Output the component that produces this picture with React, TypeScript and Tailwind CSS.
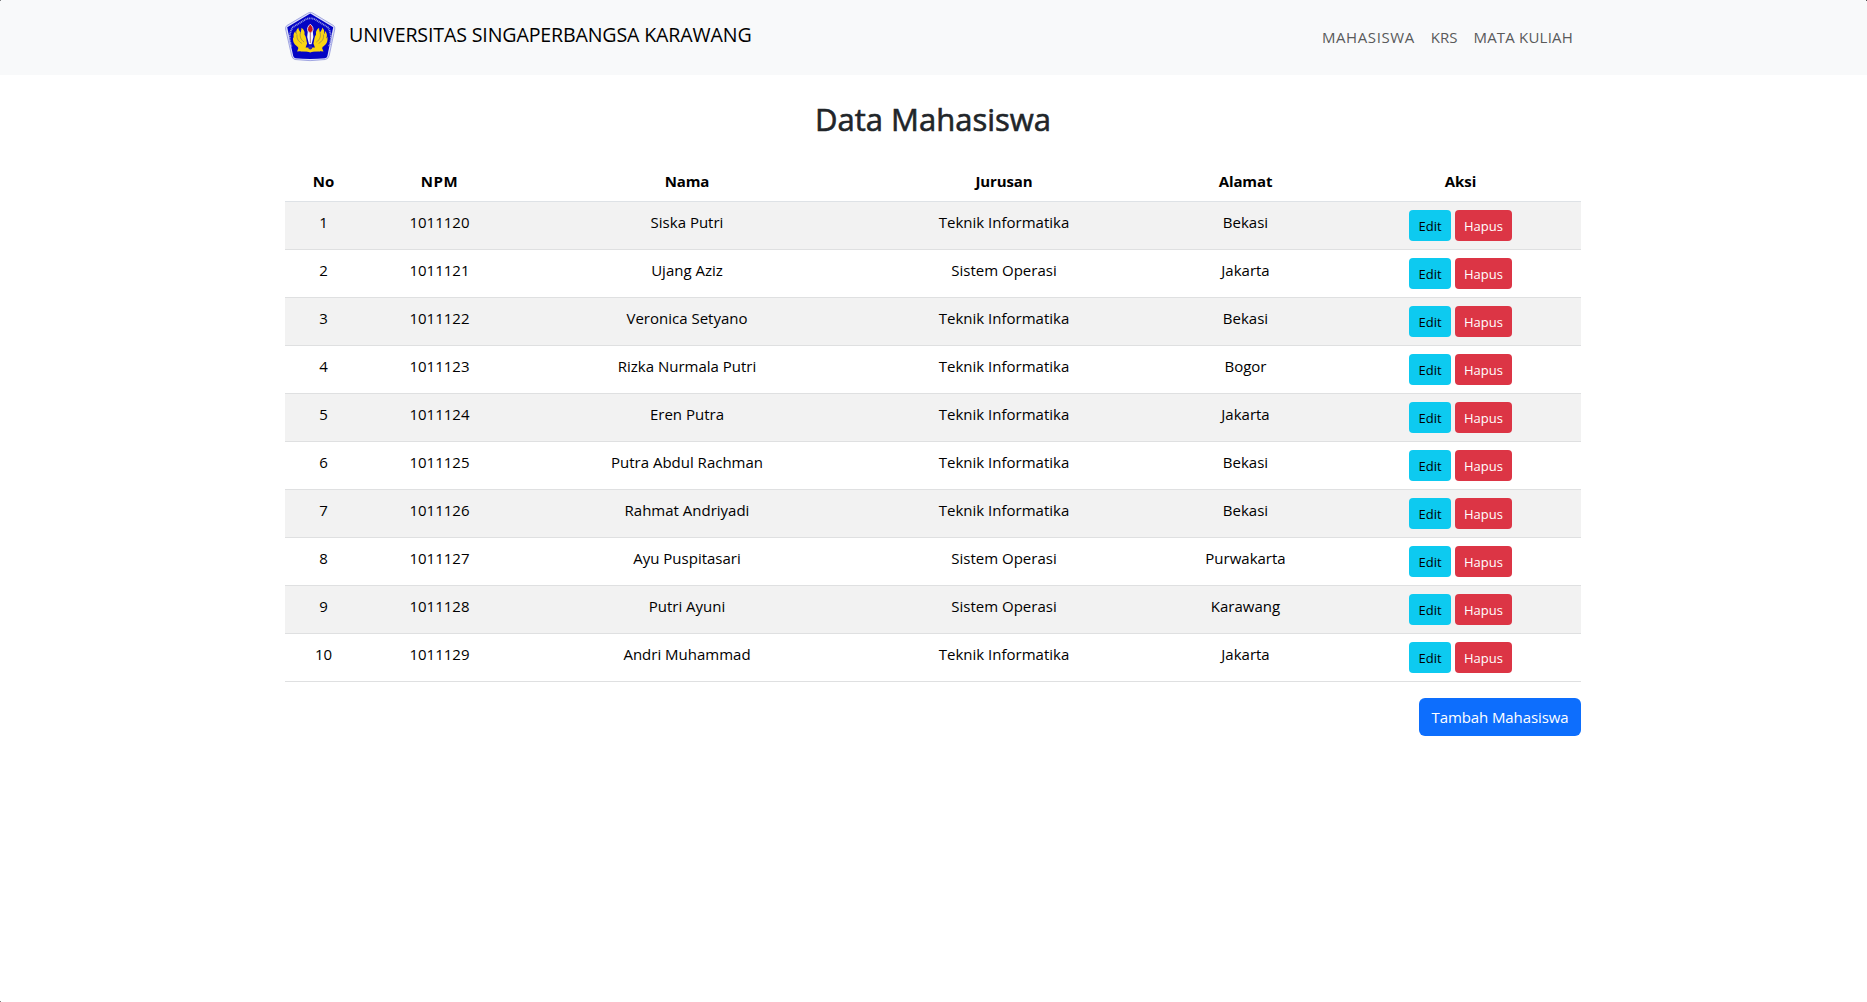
type Student = {
  npm: string;
  nama: string;
  jurusan: string;
  alamat: string;
};

const TI = 'Teknik Informatika';
const SO = 'Sistem Operasi';

const students: Student[] = [
  { npm: '1011120', nama: 'Siska Putri', jurusan: TI, alamat: 'Bekasi' },
  { npm: '1011121', nama: 'Ujang Aziz', jurusan: SO, alamat: 'Jakarta' },
  { npm: '1011122', nama: 'Veronica Setyano', jurusan: TI, alamat: 'Bekasi' },
  { npm: '1011123', nama: 'Rizka Nurmala Putri', jurusan: TI, alamat: 'Bogor' },
  { npm: '1011124', nama: 'Eren Putra', jurusan: TI, alamat: 'Jakarta' },
  { npm: '1011125', nama: 'Putra Abdul Rachman', jurusan: TI, alamat: 'Bekasi' },
  { npm: '1011126', nama: 'Rahmat Andriyadi', jurusan: TI, alamat: 'Bekasi' },
  { npm: '1011127', nama: 'Ayu Puspitasari', jurusan: SO, alamat: 'Purwakarta' },
  { npm: '1011128', nama: 'Putri Ayuni', jurusan: SO, alamat: 'Karawang' },
  { npm: '1011129', nama: 'Andri Muhammad', jurusan: TI, alamat: 'Jakarta' },
];

function Logo() {
  return (
    <svg width="52" height="54" viewBox="0 0 52 54" className="block" aria-hidden="true">
      {/* pentagon shield with a double rim */}
      <path
        d="M26.3 2.4Q27.5 2.4 29 3.2L49.6 15.6Q51.2 17 50.8 19L45.2 45.5Q44.2 49 41.4 49.5Q26 51.8 11 49.5Q8.4 49 7.6 45.5L1.6 19Q1.2 17 2.8 15.6L23.8 3.2Q25.2 2.4 26.3 2.4Z"
        fill="#dfe1f8"
        stroke="#8e94da"
        strokeWidth="0.8"
      />
      <path
        d="M26.3 3.6L49.2 17.2L43.4 46Q43 47.9 41 48.2Q26 49.8 11.6 48.2Q9.6 47.9 9.2 46L3.2 17.2Z"
        fill="#0404c4"
      />
      {/* lettering ring */}
      <path
        d="M7.6 36.5C4.8 29.5 5 23 8.8 17.2L22 9.2Q26.2 7.4 30.6 9.2L43.8 17.2C47.6 23 47.8 29.5 45 36.5"
        fill="none"
        stroke="#9498e4"
        strokeWidth="1.8"
        strokeDasharray="1.1 0.65"
      />
      {/* wings */}
      <g transform="translate(-2.4 0) scale(1.09 1)">
        <g fill="#f8d414">
          <path d="M15.6 17.6C15 20.4 17.6 21.4 17.4 24C17.2 22 18.4 20.4 18.2 17.8C20.8 20 21.4 22 21 24.4C22.8 26.6 22.6 30.6 23.4 33.6L22 37.4H30.6L29.2 33.6C30 30.6 29.8 26.6 31.6 24.4C31.2 22 31.8 20 34.4 17.8C34.2 20.4 35.4 22 35.2 24C35 21.4 37.6 20.4 37 17.6C39.6 20 39.4 22.4 38.8 24.4C39.6 23.2 40 22.4 39.8 21C42.2 23.6 41.8 26.4 41 28.4C41.4 28 41.8 27.4 42 26.4C42.8 32 40.6 35.4 36.8 37L38.4 41.4Q31 40.4 26.3 42.4Q21.6 40.4 14.2 41.4L15.8 37C12 35.4 9.8 32 10.6 26.4C10.8 27.4 11.2 28 11.6 28.4C10.8 26.4 10.4 23.6 12.8 21C12.6 22.4 13 23.2 13.8 24.4C13.2 22.4 13 20 15.6 17.6Z" />
          <path d="M14.2 36L17.6 41.6H35L38.4 36Q31 37.8 26.3 40.2Q21.6 37.8 14.2 36Z" />
        </g>
        <g fill="none" stroke="#6a5c70" strokeWidth="0.5">
          <path d="M14.2 24.5C13.6 29 15.6 31.5 18.6 33.4M17.2 23C16.4 27 18 30 20.6 32M38.4 24.5C39 29 37 31.5 34 33.4M35.4 23C36.2 27 34.6 30 32 32" />
        </g>
      </g>
      {/* torch and flame */}
      <path d="M23.8 21H28.8L29.4 27L27.6 34.2H25L23.2 27Z" fill="#f6f4ff" />
      <path d="M26.3 14.2C28.8 16.4 29.8 18.8 28.6 21.5Q26.3 24 24 21.5C22.8 18.8 23.8 16.4 26.3 14.2Z" fill="#c8141e" stroke="#f0e6f2" strokeWidth="0.9" />
      <path d="M26.3 22V33" stroke="#7a2a4a" strokeWidth="0.7" />
      <circle cx="26.3" cy="37.4" r="2" fill="#2a22b8" />
    </svg>
  );
}

const cell = 'p-0 pt-2 align-top font-normal';

export default function App() {
  return (
    <div className="relative min-h-[1002px] bg-white font-['Open_Sans',sans-serif] text-[15px] leading-6 text-[#212529]">
      <i className="absolute left-0 top-0 size-px bg-[#808284]" />
      <i className="absolute right-0 top-0 size-px bg-[#505254]" />
      <i className="absolute bottom-0 left-0 size-px bg-[#808080]" />

      <nav className="h-[75px] bg-[#f8f9fa]">
        <div className="mx-auto flex h-full w-[1297px] justify-between">
          <a className="flex text-black" href="#">
            <span className="-ml-px mt-[10px]">
              <Logo />
            </span>
            <span className="ml-[13px] mt-5 text-[19.6px] leading-[30px] tracking-[-0.14px]">
              UNIVERSITAS SINGAPERBANGSA KARAWANG
            </span>
          </a>
          <div className="mr-[9px] mt-[25px] flex gap-4 text-[#595a5a]">
            <a href="#" className="tracking-[0.6px]">MAHASISWA</a>
            <a href="#" className="tracking-normal">KRS</a>
            <a href="#" className="tracking-[0.2px]">MATA KULIAH</a>
          </div>
        </div>
      </nav>

      <main className="mx-auto w-[1297px] pr-px">
        <h2 className="pt-[25px] text-center text-[31px] font-medium leading-[38px] [-webkit-text-stroke:0.6px_#212529]">
          Data Mahasiswa
        </h2>

        <table className="mt-[23px] w-full table-fixed border-separate border-spacing-0 text-center text-black">
          <colgroup>
            <col className="w-[77px]" />
            <col className="w-[155px]" />
            <col className="w-[340px]" />
            <col className="w-[294px]" />
            <col className="w-[189px]" />
            <col className="w-[241px]" />
          </colgroup>
          <thead>
            <tr className="h-[41px] tracking-[-0.1px] *:border-b *:border-[#dee2e6] *:p-0 *:pt-2 *:align-top *:font-bold">
              <th>No</th>
              <th className="tracking-[0.6px]">NPM</th>
              <th>Nama</th>
              <th>Jurusan</th>
              <th>Alamat</th>
              <th>Aksi</th>
            </tr>
          </thead>
          <tbody>
            {students.map((s, i) => (
              <tr key={s.npm} className="h-12 odd:bg-[#f2f2f2] *:border-b *:border-[#dfe0e1]">
                <td className={cell}>{i + 1}</td>
                <td className={cell}>{s.npm}</td>
                <td className={cell}>{s.nama}</td>
                <td className={cell}>{s.jurusan}</td>
                <td className={cell}>{s.alamat}</td>
                <td className="p-0 pt-2 align-top">
                  <div className="flex justify-center gap-1 text-[13px] leading-[21px]">
                    <button className="h-[31px] w-[42px] rounded bg-[#0dcaf0] pt-0.5 text-black">Edit</button>
                    <button className="h-[31px] w-[57px] rounded bg-[#dc3545] pt-0.5 text-white">Hapus</button>
                  </div>
                </td>
              </tr>
            ))}
          </tbody>
        </table>

        <div className="mt-4 flex justify-end">
          <button className="h-[38px] w-[162px] rounded-md bg-[#0d6efd] tracking-[-0.1px] text-white">
            Tambah Mahasiswa
          </button>
        </div>
      </main>
    </div>
  );
}
